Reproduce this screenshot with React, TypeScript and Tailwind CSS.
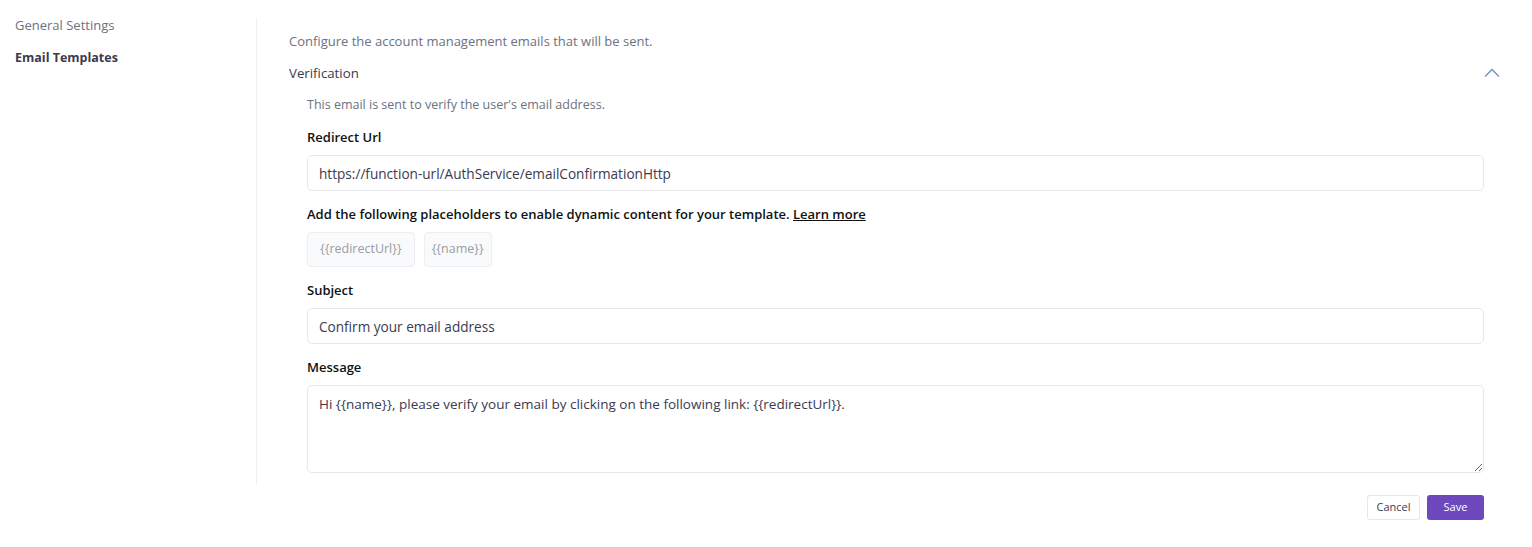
import React from 'react';

const font = { fontFamily: '"Open Sans", "Noto Sans", sans-serif' };

const Field: React.FC<{ label: React.ReactNode; children: React.ReactNode }> = ({ label, children }) => (
  <div className="flex flex-col gap-[8px]">
    <label className="text-[13px] leading-[20px] font-semibold text-[#111111]">{label}</label>
    {children}
  </div>
);

const App: React.FC = () => {
  return (
    <div className="min-h-[547px] bg-white pt-[18px]" style={font}>
      <div className="flex">
        <nav className="w-[256px] shrink-0 pl-[15px] flex flex-col gap-[19px]">
          <a className="text-[13px] leading-[14px] text-[#6b7280]">General Settings</a>
          <a className="text-[12.5px] leading-[14px] font-bold text-[#3b3a4f]">Email Templates</a>
        </nav>
        <main className="flex-1 border-l border-[#eeeff2] pl-[32px] pr-[32px] pt-[13px] pb-[11px]">
          <p className="text-[13px] leading-[20px] text-[#6b7280]">
            Configure the account management emails that will be sent.
          </p>
          <div className="mt-[12px] flex items-center justify-between">
            <h3 className="text-[13.25px] leading-[20px] font-medium text-[#3b3a4f]">Verification</h3>
            <svg width="16" height="10" viewBox="0 0 16 10">
              <polyline points="1,8.5 8,1.5 15,8.5" fill="none" stroke="#6b8fc7" strokeWidth="1.3" />
            </svg>
          </div>
          <div className="pl-[18px] pr-[16px] mt-[11px] flex flex-col gap-[13px]">
            <p className="text-[12.5px] leading-[20px] pt-[1px] -mb-[1px] text-[#6b7280]">
              This email is sent to verify the user's email address.
            </p>
            <Field label="Redirect Url">
              <input
                readOnly
                value="https://function-url/AuthService/emailConfirmationHttp"
                className="h-[36px] w-full rounded-[5px] border border-[#e8e9ed] px-[11px] text-[13.6px] text-[#3b3a4f] outline-none"
              />
            </Field>
            <Field
              label={
                <>
                  Add the following placeholders to enable dynamic content for your template.{' '}
                  <a className="underline text-[#111111] cursor-pointer">Learn more</a>
                </>
              }
            >
              <div className="flex gap-[9px]">
                <span className="h-[35px] px-[12px] flex items-center rounded-[4px] border border-[#eceef1] bg-[#f9fafb] text-[12.5px] text-[#9a9ca3]">
                  {'{{redirectUrl}}'}
                </span>
                <span className="h-[35px] px-[7px] flex items-center rounded-[4px] border border-[#eceef1] bg-[#f9fafb] text-[12.5px] text-[#9a9ca3]">
                  {'{{name}}'}
                </span>
              </div>
            </Field>
            <Field label="Subject">
              <input
                readOnly
                value="Confirm your email address"
                className="h-[36px] w-full rounded-[5px] border border-[#e8e9ed] px-[11px] text-[13.6px] text-[#3b3a4f] outline-none"
              />
            </Field>
            <Field label="Message">
              <textarea
                readOnly
                value="Hi {{name}}, please verify your email by clicking on the following link: {{redirectUrl}}."
                className="h-[88px] w-full rounded-[5px] border border-[#e8e9ed] px-[11px] py-[8px] text-[13.5px] leading-[20px] text-[#3b3a4f] outline-none"
              />
            </Field>
          </div>
        </main>
      </div>
      <div className="flex justify-end gap-[7px] pr-[48px] mt-[11px]">
        <button className="h-[25px] w-[53px] rounded-[3px] border border-[#e5e7eb] bg-white text-[11px] text-[#3b3a4f]">
          Cancel
        </button>
        <button className="h-[25px] w-[57px] rounded-[3px] bg-[#6d48bf] text-[11px] font-medium text-white">
          Save
        </button>
      </div>
    </div>
  );
};

export default App;
